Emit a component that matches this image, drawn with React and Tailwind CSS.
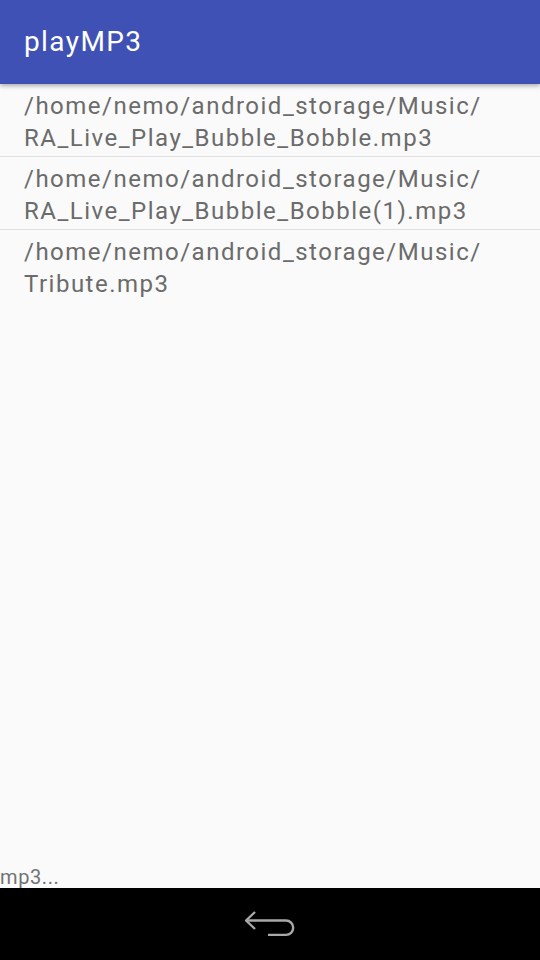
import React from 'react';

const files = [
  '/home/nemo/android_storage/Music/RA_Live_Play_Bubble_Bobble.mp3',
  '/home/nemo/android_storage/Music/RA_Live_Play_Bubble_Bobble(1).mp3',
  '/home/nemo/android_storage/Music/Tribute.mp3',
];

const BackIcon = () => (
  <svg width="60" height="36" viewBox="240 908 60 36" fill="none" stroke="#a8a8a8" strokeWidth="2.4">
    <path d="M255 914 L246 922.5 L255 931" strokeLinejoin="round" />
    <path d="M246 922.5 H286 a7.2 7.2 0 0 1 0 14.4 H268" />
  </svg>
);

const App = () => {
  return (
    <div className="w-[540px] h-[960px] flex flex-col bg-[#fafafa] overflow-hidden" style={{ fontFamily: 'Roboto, "Noto Sans", sans-serif' }}>
      <header className="h-[84px] shrink-0 bg-[#3f51b5] flex items-center px-6 shadow-[0_2px_4px_rgba(0,0,0,0.3)] relative z-10">
        <h1 className="text-white text-[28px] tracking-[1.4px] leading-none pb-[1px]">playMP3</h1>
      </header>

      <ul className="flex-1">
        {files.map((file, i) => (
          <li
            key={file}
            className={`px-6 pt-[6px] pb-[2px] text-[24px] leading-[32px] tracking-[1.5px] text-[#6b6b6b] ${i < files.length - 1 ? 'border-b border-[#e0e0e0]' : ''}`}
          >
            {file.replace('Music/', 'Music/\u200b')}
          </li>
        ))}
      </ul>

      {/* status line sits right on top of the nav bar, descenders tucked under it */}
      <div className="h-[24px] text-[20px] leading-[26px] tracking-[0.6px] text-[#737373]">mp3...</div>

      <nav className="h-[72px] shrink-0 bg-black flex items-center justify-center relative">
        <BackIcon />
      </nav>
    </div>
  );
};

export default App;
